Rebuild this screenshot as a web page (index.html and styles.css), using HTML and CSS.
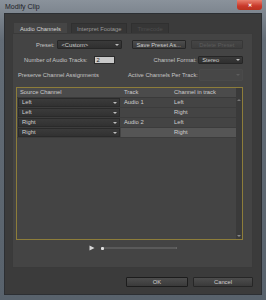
FILE: index.html
```html
<!DOCTYPE html>
<html lang="en">
<head>
  <meta charset="UTF-8" />
  <meta name="viewport" content="width=device-width, initial-scale=1.0" />
  <title>Modify Clip</title>
  <link rel="stylesheet" href="styles.css">
</head>
<body>
  <div class="window">
    <div class="titlebar">
      <span class="title">Modify Clip</span>
      <span class="close">&#x2715;</span>
    </div>
    <div class="dialog">
      <div class="tabs">
        <div class="tab active">Audio Channels</div>
        <div class="tab">Interpret Footage</div>
        <div class="tab disabled">Timecode</div>
      </div>
      <div class="panel">
        <div class="row preset-row">
          <span class="label preset-label">Preset:</span>
          <div class="select preset-select"><span>&lt;Custom&gt;</span><i class="arrow"></i></div>
          <button class="btn save-btn">Save Preset As...</button>
          <button class="btn delete-btn" disabled>Delete Preset</button>
        </div>
        <div class="row tracks-row">
          <span class="label tracks-label">Number of Audio Tracks:</span>
          <div class="num-input">2</div>
          <span class="label format-label">Channel Format:</span>
          <div class="select format-select"><span>Stereo</span><i class="arrow boxed"></i></div>
        </div>
        <div class="row assign-row">
          <span class="label assign-label">Preserve Channel Assignments</span>
          <span class="label active-label">Active Channels Per Track:</span>
          <div class="select active-select disabled"><span></span><i class="arrow"></i></div>
        </div>

        <div class="table">
          <div class="grid">
            <div class="th">Source Channel</div>
            <div class="th">Track</div>
            <div class="th">Channel in track</div>

            <div class="td src"><div class="cell-select"><span>Left</span><i class="arrow"></i></div></div>
            <div class="td">Audio 1</div>
            <div class="td">Left</div>

            <div class="td src"><div class="cell-select"><span>Left</span><i class="arrow"></i></div></div>
            <div class="td"></div>
            <div class="td">Right</div>

            <div class="td src"><div class="cell-select"><span>Right</span><i class="arrow"></i></div></div>
            <div class="td">Audio 2</div>
            <div class="td">Left</div>

            <div class="td src"><div class="cell-select"><span>Right</span><i class="arrow"></i></div></div>
            <div class="td selected"></div>
            <div class="td selected">Right</div>
          </div>
          <div class="scrollbar">
            <i class="sb-up"></i>
            <i class="sb-down"></i>
          </div>
        </div>

        <div class="player">
          <svg class="play" width="6" height="6" viewBox="0 0 6 6"><path d="M0.5 0.5 L5.5 3 L0.5 5.5 Z" fill="#d8d8d8"/></svg>
          <span class="thumb"></span>
          <span class="track"></span>
        </div>
      </div>
      <div class="footer">
        <button class="btn ok-btn">OK</button>
        <button class="btn cancel-btn">Cancel</button>
      </div>
    </div>
  </div>
</body>
</html>
```

FILE: styles.css
```css
body {
  margin: 0;
  background: #5b646e;
  font-family: "Liberation Sans", Arial, sans-serif;
  font-size: 5.8px;
  color: #c4c4c4;
}
.window {
  width: 266px;
  height: 300px;
  box-sizing: border-box;
  padding: 0 4px 5px 4px;
  background: linear-gradient(#8a929b, #636c76 40px, #58626c);
  display: flex;
  flex-direction: column;
}
.titlebar {
  height: 13px;
  position: relative;
  display: flex;
  align-items: center;
}
.title {
  color: #1d2126;
  font-size: 7px;
  padding-left: 1px;
}
.close {
  position: absolute;
  right: 0;
  top: 0;
  width: 25px;
  height: 10px;
  border-radius: 0 0 3px 3px;
  background: linear-gradient(#e8806e, #c9382a 60%, #b8321f);
  color: #fff;
  font-size: 5px;
  font-weight: bold;
  text-align: center;
  line-height: 10px;
}
.dialog {
  flex: 1;
  background: #3b3b3b;
  border: 1px solid #2c2f33;
  padding: 9px 8px 7px 7px;
  display: flex;
  flex-direction: column;
}
.tabs {
  display: flex;
  height: 10px;
  padding-left: 2px;
  gap: 4px;
}
.tab {
  padding: 0 5px;
  line-height: 10px;
  background: #363636;
  color: #9a9a9a;
  border: 1px solid #303030;
  border-bottom: none;
}
.tab.active {
  background: #454545;
  color: #d6d6d6;
  border-color: #454545;
}
.tab.disabled {
  color: #4f4f4f;
  width: 26px;
}
.panel {
  height: 235px;
  box-sizing: border-box;
  background: #444;
  border: 1px solid #3a3a3a;
  padding: 6px 9px 0 3px;
  display: flex;
  flex-direction: column;
}
.row {
  display: flex;
  align-items: center;
}
.label {
  white-space: nowrap;
}
.preset-row {
  height: 9px;
}
.preset-label {
  width: 39px;
  text-align: right;
  margin-right: 3px;
}
.select {
  height: 9px;
  box-sizing: border-box;
  background: linear-gradient(#3a3a3a, #2f2f2f);
  border: 1px solid #262626;
  border-radius: 1px;
  display: flex;
  align-items: center;
  justify-content: space-between;
  padding: 0 2px 0 3px;
  color: #cfcfcf;
}
.arrow {
  width: 0;
  height: 0;
  border-left: 2px solid transparent;
  border-right: 2px solid transparent;
  border-top: 2px solid #bdbdbd;
}
.arrow.boxed {
  box-shadow: -4px 0 0 -3px #1f1f1f;
}
.preset-select {
  width: 65px;
}
.btn {
  height: 9px;
  box-sizing: border-box;
  padding: 0;
  font-family: inherit;
  font-size: 5.8px;
  color: #cfcfcf;
  background: linear-gradient(#4d4d4d, #3a3a3a);
  border: 1px solid #262626;
  border-radius: 1px;
}
.btn:disabled {
  color: #5c5c5c;
  background: linear-gradient(#454545, #3d3d3d);
  border-color: #373737;
}
.save-btn {
  width: 55px;
  margin-left: 10px;
}
.delete-btn {
  width: 53px;
  margin-left: 5px;
}
.tracks-row {
  height: 8px;
  margin-top: 7px;
}
.tracks-label {
  margin-left: 8px;
  width: 70px;
}
.num-input {
  width: 22px;
  height: 8px;
  box-sizing: border-box;
  background: #c9c9c9;
  border: 1px solid #2a2a2a;
  color: #222;
  line-height: 6px;
  padding-left: 2px;
}
.format-label {
  margin-left: 38px;
  width: 45px;
}
.format-select {
  width: 45px;
  height: 8px;
}
.assign-row {
  height: 12px;
  margin-top: 5px;
}
.assign-label {
  margin-left: 2px;
  width: 110px;
}
.active-label {
  width: 71px;
}
.active-select {
  width: 44px;
  height: 12px;
  background: #474747;
  border-color: #4a4a4a;
}
.active-select .arrow {
  border-top-color: #5d5d5d;
}
.table {
  margin-top: 6px;
  height: 153px;
  box-sizing: border-box;
  border: 1px solid #8d7d3a;
  background: #444;
  display: flex;
}
.grid {
  flex: 1;
  display: grid;
  grid-template-columns: 104px 50px 1fr;
  grid-auto-rows: 10px;
  align-content: start;
}
.th {
  background: #4b4b4b;
  border-bottom: 1px solid #3a3a3a;
  line-height: 9px;
  padding-left: 3px;
  color: #cdcdcd;
}
.td {
  line-height: 9px;
  padding-left: 3px;
  border-bottom: 1px solid #3c3c3c;
  color: #d0d0d0;
}
.td.src {
  padding: 0 1px 0 1px;
}
.td.selected {
  background: #555;
}
.cell-select {
  height: 9px;
  box-sizing: border-box;
  background: linear-gradient(#3b3b3b, #313131);
  border: 1px solid #2a2a2a;
  display: flex;
  align-items: center;
  justify-content: space-between;
  padding: 0 2px 0 3px;
}
.scrollbar {
  width: 6px;
  background: #3a3a3a;
  display: flex;
  flex-direction: column;
  justify-content: space-between;
  align-items: center;
  padding: 11px 0 2px;
}
.sb-up {
  width: 0;
  height: 0;
  border-left: 2px solid transparent;
  border-right: 2px solid transparent;
  border-bottom: 2px solid #777;
}
.sb-down {
  width: 0;
  height: 0;
  border-left: 2px solid transparent;
  border-right: 2px solid transparent;
  border-top: 2px solid #888;
}
.player {
  display: flex;
  align-items: center;
  height: 6px;
  margin-top: 5px;
  padding-left: 73px;
}
.play {
  display: block;
}
.thumb {
  width: 3px;
  height: 3px;
  background: #e0e0e0;
  border-radius: 1px;
  margin-left: 6px;
}
.track {
  width: 72px;
  height: 2px;
  background: #5a5a5a;
  border-right: 1px solid #666;
}
.footer {
  display: flex;
  justify-content: flex-end;
  gap: 5px;
  margin-top: 9px;
}
.ok-btn {
  width: 62px;
  height: 10px;
  border-color: #1c1c1c;
}
.cancel-btn {
  width: 60px;
  height: 10px;
}
```
